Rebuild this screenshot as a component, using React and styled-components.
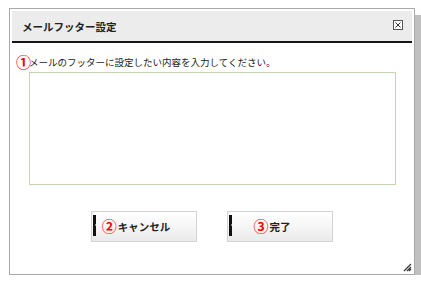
import React from 'react';
import styled, { createGlobalStyle } from 'styled-components';

const GlobalStyle = createGlobalStyle`
  html, body {
    margin: 0;
    padding: 0;
    background: #fff;
  }
  body {
    font-family: "Noto Sans CJK JP", "Liberation Sans", sans-serif;
    color: #222;
  }
`;

const Dialog = styled.div`
  position: relative;
  box-sizing: border-box;
  margin: 8px 0 0 9px;
  width: 406px;
  height: 267px;
  padding: 2px;
  background: #fff;
  border: 1px solid #a9a9a9;
  box-shadow: 8px 7px 0 #c0c0c0;
  display: flex;
  flex-direction: column;
`;

const Header = styled.div`
  display: flex;
  align-items: center;
  justify-content: space-between;
  height: 30px;
  padding: 0 9px 0 10px;
  background: #ececec;
  border-bottom: 2px solid #151515;
`;

const Title = styled.h1`
  margin: 0;
  font-size: 10.5px;
  font-weight: bold;
  color: #222;
`;

const CloseButton = styled.button`
  display: flex;
  padding: 0;
  margin-top: -3px;
  border: none;
  background: none;
  cursor: pointer;
`;

const Body = styled.div`
  flex: 1;
  display: flex;
  flex-direction: column;
  padding: 12px 17px 0 17px;
`;

const Label = styled.p`
  position: relative;
  margin: 0 0 3px 0;
  font-size: 9.5px;
  line-height: 14px;
  color: #222;
`;

const Mark = styled.span`
  position: absolute;
  top: -1px;
  right: calc(100% + 1px);
  color: #f00;
  font-size: 15px;
  line-height: 15px;
  font-weight: bold;
  font-family: "Noto Sans CJK JP", sans-serif;
`;

const LabelMark = styled(Mark)`
  right: auto;
  left: -13px;
`;

const TextBox = styled.textarea`
  box-sizing: border-box;
  width: 367px;
  height: 113px;
  resize: none;
  border: 1px solid #c6d4ae;
  outline: none;
  padding: 2px;
  font: inherit;
`;

const Buttons = styled.div`
  display: flex;
  justify-content: center;
  gap: 30px;
  margin-top: 26px;
`;

const Button = styled.button`
  position: relative;
  box-sizing: border-box;
  width: 106px;
  height: 31px;
  padding: 0;
  border: 1px solid #d3d3d3;
  background: linear-gradient(#ffffff, #f6f6f6 50%, #e9e9e9);
  font-family: "Noto Sans CJK JP", sans-serif;
  font-size: 10.5px;
  font-weight: bold;
  color: #222;
  cursor: pointer;

  &::before {
    content: '';
    position: absolute;
    left: 1px;
    top: 3px;
    width: 3px;
    height: 21px;
    background: #111;
  }
  &::after {
    content: '';
    position: absolute;
    left: 3px;
    top: 12px;
    border-top: 1.5px solid transparent;
    border-bottom: 1.5px solid transparent;
    border-left: 1.5px solid #fff;
  }
`;

const ButtonText = styled.span`
  position: relative;
`;

const Grip = styled.svg`
  position: absolute;
  right: 2px;
  bottom: 2px;
`;

const CloseIcon = () => (
  <svg width="10" height="10" viewBox="0 0 10 10">
    <rect x="0.5" y="0.5" width="9" height="9" fill="#fff" stroke="#555" />
    <path d="M2.5 2.5 L7.5 7.5 M7.5 2.5 L2.5 7.5" stroke="#333" strokeWidth="1" />
  </svg>
);

const App = () => {
  return (
    <>
      <GlobalStyle />
      <Dialog>
        <Header>
          <Title>メールフッター設定</Title>
          <CloseButton aria-label="閉じる">
            <CloseIcon />
          </CloseButton>
        </Header>
        <Body>
          <Label>
            <LabelMark>①</LabelMark>
            メールのフッターに設定したい内容を入力してください。
          </Label>
          <TextBox />
          <Buttons>
            <Button>
              <ButtonText>
                <Mark>②</Mark>
                キャンセル
              </ButtonText>
            </Button>
            <Button>
              <ButtonText>
                <Mark>③</Mark>
                完了
              </ButtonText>
            </Button>
          </Buttons>
        </Body>
        <Grip width="10" height="10" viewBox="0 0 10 10">
          <path d="M9 2 L2 9 M9 5 L5 9 M9 7 L7 9" stroke="#333" strokeWidth="1.2" />
        </Grip>
      </Dialog>
    </>
  );
};

export default App;
